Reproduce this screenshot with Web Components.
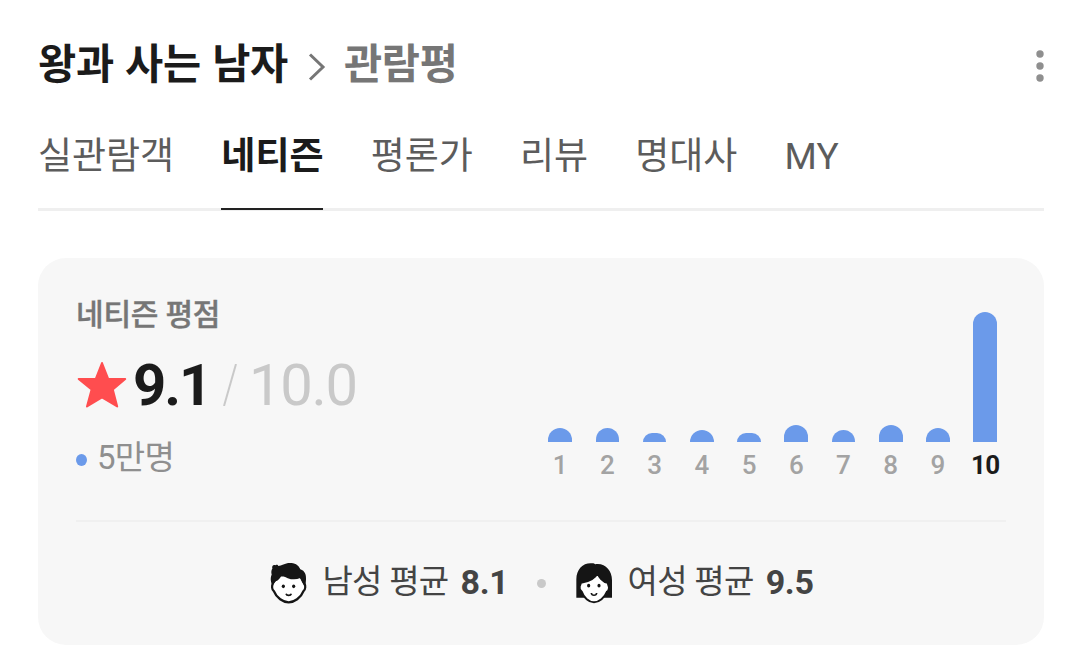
<!DOCTYPE html>
<html lang="ko">
<head>
<meta charset="utf-8">
<title>왕과 사는 남자 관람평</title>
<style>
  body {
    margin: 0;
    background: #fff;
    color: #1b1b1b;
    font-family: Roboto, "Noto Sans CJK KR", sans-serif;
  }
</style>
</head>
<body>

<template id="page-title">
  <style>
    :host { display: flex; align-items: center; height: 60px; font-size: 41.5px; line-height: 60px; font-weight: 700; letter-spacing: -0.3px; font-family: "Noto Sans CJK KR", sans-serif; }
    .name, .section { margin-top: -4px; }
    .chevron { width: 18px; height: 28px; margin: 7px 18px 0 20px; }
    .section { color: #767676; flex: 1; }
    .more { width: 8px; height: 32px; margin-top: 5px; }
  </style>
  <span class="name"><slot></slot></span>
  <svg class="chevron" viewBox="0 0 18 28" fill="none" stroke="#767676" stroke-width="3"><path d="M2 1.5 15 14 2 26.5"/></svg>
  <span class="section"><slot name="section"></slot></span>
  <svg class="more" viewBox="0 0 8 32" fill="#8f8f8f"><circle cx="4" cy="4" r="3.7"/><circle cx="4" cy="16" r="3.7"/><circle cx="4" cy="28" r="3.7"/></svg>
</template>

<template id="tab-item">
  <style>
    :host { display: block; box-sizing: border-box; height: 80px; font-size: 37px; line-height: 54px; color: #5c5c5c; }
    :host([selected]) { color: #1b1b1b; font-weight: 700; border-bottom: 2px solid #222; }
  </style>
  <slot></slot>
</template>

<template id="tab-bar">
  <style>
    :host { display: flex; gap: 47.2px; height: 78px; border-bottom: 3px solid #efefef; }
  </style>
  <slot></slot>
</template>

<template id="score-summary">
  <style>
    :host { display: flex; flex-direction: column; }
    .label { padding-top: 1px; font-size: 30px; line-height: 44px; font-weight: 500; letter-spacing: -0.2px; color: #767676; -webkit-text-stroke: 0.4px; }
    .score { display: flex; align-items: center; height: 70px; margin-top: 12px; font-size: 58px; line-height: 70px; letter-spacing: -1.3px; }
    .star { width: 50px; height: 48px; margin: 0 6px 0 1px; }
    .value, .max { padding-top: 2px; }
    .value { font-weight: 700; letter-spacing: -2px; }
    .slash { width: 14px; height: 42px; margin: 1px 12px 0 12.5px; }
    .max { color: #c9c9c9; }
    .count { display: flex; align-items: center; margin-top: 15px; font-size: 33px; line-height: 48px; letter-spacing: -0.7px; color: #8f8f8f; }
    .count::before { content: ""; width: 11px; height: 12px; margin: 3px 10px 0 0; border-radius: 50%; background: #6b9aea; }
  </style>
  <div class="label"><slot name="label"></slot></div>
  <div class="score">
    <svg class="star" viewBox="0 0 50 48" fill="#ff4d4f" stroke="#ff4d4f" stroke-width="2" stroke-linejoin="round"><path d="M25 3 31.2 18.8 48.2 19 35.8 29.6 40.2 46.5 25 37.5 10 46.5 14.6 29.6 1.7 19 18.8 18.8Z"/></svg>
    <span class="value"><slot name="value"></slot></span>
    <svg class="slash" viewBox="0 0 14 42" stroke="#c9c9c9" stroke-width="2"><path d="M13 0 1 42"/></svg>
    <span class="max"><slot name="max"></slot></span>
  </div>
  <div class="count"><slot name="count"></slot></div>
</template>

<template id="chart-bar">
  <style>
    :host { display: flex; flex-direction: column; justify-content: flex-end; align-items: center; width: 23.6px; font-size: 26px; line-height: 30px; font-weight: 500; color: #a3a3a3; }
    :host([peak]) { color: #1b1b1b; font-weight: 700; letter-spacing: -0.6px; }
    .bar { width: 100%; border-radius: 12px 12px 0 0; background: #6b9aea; }
    .label { margin-top: 8px; }
  </style>
  <div class="bar"></div>
  <div class="label"><slot></slot></div>
</template>

<template id="score-chart">
  <style>
    :host { display: flex; gap: 23.65px; }
  </style>
  <slot></slot>
</template>

<template id="male-face">
  <style>
    :host, svg { display: block; width: 37px; height: 42.67px; }
  </style>
  <svg viewBox="33 36 111 128" fill="#151515">
    <path d="M43 97C38 107 38 119 45 124C52 143 73 157 89 157C105 157 126 143 133 124C140 119 140 107 135 97L122 76H60Z" fill="#fff" stroke="#151515" stroke-width="7"/>
    <path d="M41 106C34 96 34 82 38 74C36 66 37 60 40 56C38 49 42 43 50 46C53 43 57 45 58 48C68 47 80 37 97 39C112 40 121 49 124 58C138 63 142 74 141 88C141 98 139 103 136 108C131 101 127 93 124 84C106 92 86 88 68 74C64 85 58 91 50 94Z"/>
    <path d="M81 131C83 138 95 138 97 131" fill="none" stroke="#151515" stroke-width="5"/>
    <ellipse cx="73" cy="109" rx="4.8" ry="5.4"/>
    <ellipse cx="104" cy="109" rx="4.8" ry="5.4"/>
  </svg>
</template>

<template id="female-face">
  <style>
    :host, svg { display: block; width: 37px; height: 42.67px; }
  </style>
  <svg viewBox="33 36 111 128" fill="#151515">
    <path d="M34 143V88C34 56 56 37 82 40C86 40 89 42 91 43C119 38 141 61 141 90V143H115L92 154H77L57 143Z"/>
    <path d="M48 98C70 95 90 85 98 69C101 80 113 96 128 98L132 112C132 120 128 125 126 125C119 143 102 157 87 157C72 157 56 143 50 125C45 122 43 115 44 109Z" fill="#fff" stroke="#151515" stroke-width="6"/>
    <path d="M79 129C80 138 94 138 95 129" fill="none" stroke="#151515" stroke-width="5"/>
    <ellipse cx="71" cy="107" rx="4.8" ry="5.4"/>
    <ellipse cx="102" cy="107" rx="4.8" ry="5.4"/>
  </svg>
</template>

<template id="gender-average">
  <style>
    :host { display: flex; align-items: center; font-size: 33px; line-height: 48px; color: #444; }
    .face { margin-right: 15px; }
    .label { letter-spacing: -0.7px; }
    .label, .value { margin-top: -3px; }
    .value { margin-left: 12px; font-size: 34px; font-weight: 700; letter-spacing: -0.3px; }
  </style>
  <div class="face"><slot name="face"></slot></div>
  <span class="label"><slot></slot></span>
  <span class="value"><slot name="value"></slot></span>
</template>

<template id="rating-card">
  <style>
    :host { display: block; box-sizing: border-box; height: 387px; padding: 34px 38px 0; border-radius: 28px; background: #f7f7f7; }
    .top { display: flex; justify-content: space-between; height: 228px; padding-right: 9px; border-bottom: 2px solid #f0f0f0; }
    .chart { display: flex; height: 188px; }
    .bottom { display: flex; justify-content: center; align-items: center; height: 123px; padding-left: 2px; }
    .dot { width: 9px; height: 9px; margin: 0 29.5px 0 28.5px; border-radius: 50%; background: #c9c9c9; }
  </style>
  <div class="top">
    <slot name="summary"></slot>
    <div class="chart"><slot name="chart"></slot></div>
  </div>
  <div class="bottom">
    <slot name="male"></slot>
    <span class="dot"></span>
    <slot name="female"></slot>
  </div>
</template>

<template id="review-page">
  <style>
    :host { display: block; padding: 33px 36px 0 38px; }
    tab-bar { margin-top: 37px; }
    rating-card { margin-top: 47px; }
  </style>
  <page-title>왕과 사는 남자<span slot="section">관람평</span></page-title>
  <tab-bar>
    <tab-item>실관람객</tab-item>
    <tab-item selected>네티즌</tab-item>
    <tab-item>평론가</tab-item>
    <tab-item>리뷰</tab-item>
    <tab-item>명대사</tab-item>
    <tab-item>MY</tab-item>
  </tab-bar>
  <rating-card>
    <score-summary slot="summary">
      <span slot="label">네티즌 평점</span>
      <span slot="value">9.1</span>
      <span slot="max">10.0</span>
      <span slot="count">5만명</span>
    </score-summary>
    <score-chart slot="chart">
      <chart-bar size="14">1</chart-bar>
      <chart-bar size="14">2</chart-bar>
      <chart-bar size="9">3</chart-bar>
      <chart-bar size="12">4</chart-bar>
      <chart-bar size="9">5</chart-bar>
      <chart-bar size="17">6</chart-bar>
      <chart-bar size="12">7</chart-bar>
      <chart-bar size="17">8</chart-bar>
      <chart-bar size="14">9</chart-bar>
      <chart-bar size="130" peak>10</chart-bar>
    </score-chart>
    <gender-average slot="male"><male-face slot="face"></male-face>남성 평균<span slot="value">8.1</span></gender-average>
    <gender-average slot="female"><female-face slot="face"></female-face>여성 평균<span slot="value">9.5</span></gender-average>
  </rating-card>
</template>

<review-page></review-page>

<script>
class TemplateElement extends HTMLElement {
  constructor() {
    super();

    const template = document.getElementById(this.localName);
    const shadowRoot = this.attachShadow({ mode: 'open' });

    shadowRoot.appendChild(document.importNode(template.content, true));
  }
}

class ChartBar extends TemplateElement {
  connectedCallback() {
    const bar = this.shadowRoot.querySelector('.bar');

    bar.style.height = this.getAttribute('size') + 'px';
  }
}

customElements.define('page-title', class extends TemplateElement {});
customElements.define('tab-item', class extends TemplateElement {});
customElements.define('tab-bar', class extends TemplateElement {});
customElements.define('score-summary', class extends TemplateElement {});
customElements.define('chart-bar', ChartBar);
customElements.define('score-chart', class extends TemplateElement {});
customElements.define('male-face', class extends TemplateElement {});
customElements.define('female-face', class extends TemplateElement {});
customElements.define('gender-average', class extends TemplateElement {});
customElements.define('rating-card', class extends TemplateElement {});
customElements.define('review-page', class extends TemplateElement {});
</script>
</body>
</html>
